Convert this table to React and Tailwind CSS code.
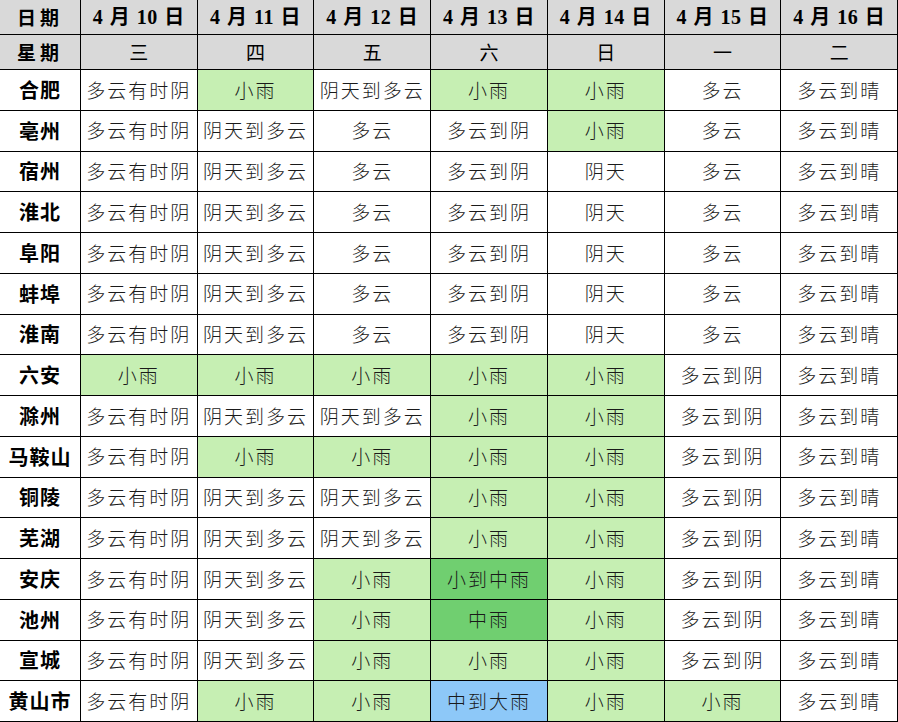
import React from "react";

const dates = ["4 月 10 日", "4 月 11 日", "4 月 12 日", "4 月 13 日", "4 月 14 日", "4 月 15 日", "4 月 16 日"];
const weekdays = ["三", "四", "五", "六", "日", "一", "二"];

// g = light green, G = mid green, b = blue
const rows = [
  ["合肥", ["多云有时阴", "小雨:g", "阴天到多云", "小雨:g", "小雨:g", "多云", "多云到晴"]],
  ["亳州", ["多云有时阴", "阴天到多云", "多云", "多云到阴", "小雨:g", "多云", "多云到晴"]],
  ["宿州", ["多云有时阴", "阴天到多云", "多云", "多云到阴", "阴天", "多云", "多云到晴"]],
  ["淮北", ["多云有时阴", "阴天到多云", "多云", "多云到阴", "阴天", "多云", "多云到晴"]],
  ["阜阳", ["多云有时阴", "阴天到多云", "多云", "多云到阴", "阴天", "多云", "多云到晴"]],
  ["蚌埠", ["多云有时阴", "阴天到多云", "多云", "多云到阴", "阴天", "多云", "多云到晴"]],
  ["淮南", ["多云有时阴", "阴天到多云", "多云", "多云到阴", "阴天", "多云", "多云到晴"]],
  ["六安", ["小雨:g", "小雨:g", "小雨:g", "小雨:g", "小雨:g", "多云到阴", "多云到晴"]],
  ["滁州", ["多云有时阴", "阴天到多云", "阴天到多云", "小雨:g", "小雨:g", "多云到阴", "多云到晴"]],
  ["马鞍山", ["多云有时阴", "小雨:g", "小雨:g", "小雨:g", "小雨:g", "多云到阴", "多云到晴"]],
  ["铜陵", ["多云有时阴", "阴天到多云", "阴天到多云", "小雨:g", "小雨:g", "多云到阴", "多云到晴"]],
  ["芜湖", ["多云有时阴", "阴天到多云", "阴天到多云", "小雨:g", "小雨:g", "多云到阴", "多云到晴"]],
  ["安庆", ["多云有时阴", "阴天到多云", "小雨:g", "小到中雨:G", "小雨:g", "多云到阴", "多云到晴"]],
  ["池州", ["多云有时阴", "阴天到多云", "小雨:g", "中雨:G", "小雨:g", "多云到阴", "多云到晴"]],
  ["宣城", ["多云有时阴", "阴天到多云", "小雨:g", "小雨:g", "小雨:g", "多云到阴", "多云到晴"]],
  ["黄山市", ["多云有时阴", "小雨:g", "小雨:g", "中到大雨:b", "小雨:g", "小雨:g", "多云到晴"]],
];

const bgFor = {
  g: "bg-[#c6efb3]",
  G: "bg-[#70cf70]",
  b: "bg-[#8dc8f8]",
};

const serif = "font-['Liberation_Serif','Noto_Sans_CJK_SC',serif]";
const cjk = "font-['Noto_Sans_CJK_SC',sans-serif]";

const App = () => {
  return (
    <div className="w-[898px] h-[722px] bg-white overflow-hidden">
      <div className="grid grid-cols-[81px_repeat(7,1fr)] grid-rows-[35px_35px_repeat(16,1fr)] w-full h-full">
        {/* Header row: dates */}
        <div className={`bg-[#d9d9d9] border-r border-b border-black flex items-center justify-center text-[19px] font-bold tracking-[4px] text-black ${cjk}`}>
          日期
        </div>
        {dates.map((d) => (
          <div
            key={d}
            className={`bg-[#d9d9d9] border-r border-b border-black flex items-center justify-center text-[20px] font-bold text-black whitespace-pre tracking-[0.5px] [word-spacing:1px] ${serif}`}
          >
            {d}
          </div>
        ))}

        {/* Header row: weekdays */}
        <div className={`bg-[#d9d9d9] border-r border-b border-black flex items-center justify-center text-[19px] font-bold tracking-[4px] text-black ${cjk}`}>
          星期
        </div>
        {weekdays.map((w) => (
          <div
            key={w}
            className={`bg-[#d9d9d9] border-r border-b border-black flex items-center justify-center text-[19px] text-black ${cjk}`}
          >
            {w}
          </div>
        ))}

        {/* City rows */}
        {rows.map(([city, cells]) => (
          <React.Fragment key={city}>
            <div
              className={`bg-white border-r border-b border-black flex items-center justify-center text-[20px] font-bold tracking-[1px] text-black ${cjk}`}
            >
              {city}
            </div>
            {cells.map((c, i) => {
              const [text, tone] = c.split(":");
              return (
                <div
                  key={i}
                  className={`${tone ? bgFor[tone] : "bg-white"} border-r border-b border-black flex items-center justify-center text-[19px] font-light tracking-[2px] text-[#1a1a1a] whitespace-nowrap ${cjk}`}
                >
                  {text}
                </div>
              );
            })}
          </React.Fragment>
        ))}
      </div>
    </div>
  );
};

export default App;
